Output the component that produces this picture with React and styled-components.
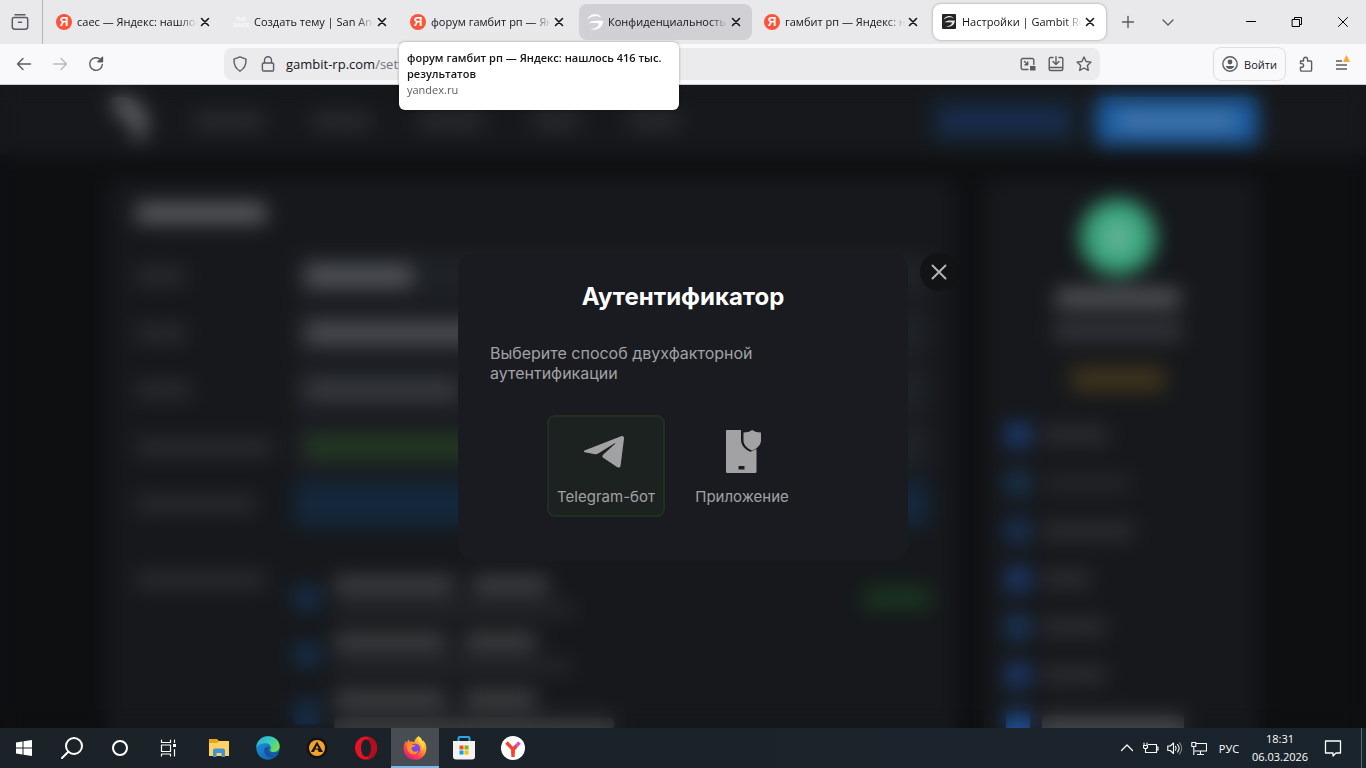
import React from "react";
import styled, { createGlobalStyle, css } from "styled-components";

const GlobalStyle = createGlobalStyle`
  *, *::before, *::after { box-sizing: border-box; }
  body { margin: 0; background: #0e0f11; }
  button, input { font: inherit; color: inherit; }
  button { border: 0; padding: 0; background: none; cursor: pointer; }
  svg { display: block; flex: none; }
`;

const uiFont = `"Segoe UI", "Open Sans", "Noto Sans", sans-serif`;

const Shell = styled.div`
  display: flex;
  flex-direction: column;
  height: 100vh;
  font-family: ${uiFont};
  font-size: 11px;
  color: #15141a;
`;

/* ---------- Tab strip ---------- */

const TabStrip = styled.header`
  display: flex;
  align-items: center;
  height: 44px;
  flex: none;
  background: #e9e9eb;
`;

const RecentButton = styled.button`
  display: grid;
  place-items: center;
  width: 43px;
  height: 44px;
  padding-right: 2px;
  flex: none;
  border-right: 1px solid #b4b4b9;
`;

const Tabs = styled.div`
  display: flex;
  gap: 4px;
  padding: 0 2px 0 5px;
  min-width: 0;
`;

const Tab = styled.div`
  position: relative;
  display: flex;
  align-items: center;
  flex: 0 1 173px;
  width: 173px;
  min-width: 0;
  height: 36px;
  padding: 0 8px;
  border-radius: 8px;
  ${(p) => p.$state === "hover" && css`background: #d0d0d5;`}
  ${(p) => p.$state === "active" && css`
    background: #fff;
    box-shadow: 0 0 3px rgba(0, 0, 0, 0.35);
  `}
`;

const TabButton = styled.button`
  display: flex;
  align-items: center;
  gap: 5px;
  flex: 1;
  min-width: 0;
  height: 36px;
  text-align: left;
`;

const TabTitle = styled.span`
  flex: 1;
  overflow: hidden;
  white-space: nowrap;
  line-height: 20px;
  mask-image: linear-gradient(to right, #000 85%, transparent);
`;

const TabClose = styled.button`
  display: grid;
  place-items: center;
  width: 16px;
  height: 16px;
  flex: none;
`;

const YandexIcon = styled.span`
  display: grid;
  place-items: center;
  width: 16px;
  height: 16px;
  flex: none;
  border-radius: 50%;
  background: #fc5339;
  color: #fff;
  font: 700 12px/16px "Liberation Sans", sans-serif;
`;

const Tooltip = styled.div`
  position: absolute;
  z-index: 5;
  top: 38px;
  left: -3px;
  width: 280px;
  padding: 8px 8px 12px;
  border-radius: 6px;
  background: #fff;
  box-shadow: 0 0 3px rgba(0, 0, 0, 0.35);
  line-height: 16px;
  white-space: normal;
`;

const TooltipTitle = styled.strong`
  display: block;
  font-weight: 600;
`;

const TooltipHost = styled.span`
  display: block;
  color: #5b5b66;
`;

const StripButton = styled.button`
  display: grid;
  place-items: center;
  width: 40px;
  height: 36px;
  flex: none;
`;

const WindowControls = styled.div`
  display: flex;
  margin-left: auto;
  flex: none;
`;

const WindowButton = styled.button`
  display: grid;
  place-items: center;
  width: 46px;
  height: 44px;
`;

/* ---------- Toolbar ---------- */

const Toolbar = styled.nav`
  display: flex;
  align-items: center;
  height: 41px;
  flex: none;
  padding: 0 6px;
  background: #f9f9fb;
  border-bottom: 1px solid #ccccd1;
  color: #5b5b66;
`;

const ToolButton = styled.button`
  display: grid;
  place-items: center;
  width: 36px;
  height: 32px;
  flex: none;
  opacity: ${(p) => (p.disabled ? 0.4 : 1)};
`;

const Spring = styled.div`
  flex: 0 1 ${(p) => p.$size}px;
`;

const UrlBar = styled.div`
  display: flex;
  align-items: center;
  flex: 1;
  min-width: 0;
  height: 32px;
  padding: 0 2px;
  border-radius: 8px;
  background: #ebebed;
`;

const UrlButton = styled.button`
  display: grid;
  place-items: center;
  width: 28px;
  height: 28px;
  flex: none;
`;

const Url = styled.a`
  flex: 1;
  min-width: 0;
  padding-left: 4px;
  font-size: 13px;
  line-height: 20px;
  color: #73737c;
  text-decoration: none;
  white-space: nowrap;
  overflow: hidden;
`;

const UrlHost = styled.span`
  color: #15141a;
`;

const SignIn = styled.button`
  display: flex;
  align-items: center;
  justify-content: center;
  gap: 6px;
  width: 73px;
  height: 34px;
  margin-right: 2px;
  flex: none;
  border: 1px solid #dedee2;
  border-radius: 8px;
  color: #15141a;
`;

/* ---------- Page under the dialog ---------- */

const Page = styled.main`
  position: relative;
  display: grid;
  place-items: center;
  flex: 1;
  min-height: 0;
  overflow: hidden;
  background: #0e0f11;
  font-family: Inter, sans-serif;
`;

const Site = styled.div`
  position: absolute;
  inset: 0;
  overflow: hidden;
`;

const Haze = styled.div`
  position: absolute;
  inset: 0;
  backdrop-filter: blur(10px);
`;

const SiteHeader = styled.div`
  height: 70px;
  background: #16181b;
`;

const Container = styled.div`
  display: flex;
  max-width: 1150px;
  margin: 0 auto;
`;

const HeaderRow = styled(Container)`
  align-items: center;
  height: 72px;
`;

const SiteNav = styled.div`
  display: flex;
  gap: 48px;
  padding-left: 42px;
  flex: 1;
`;

const Bar = styled.span`
  display: block;
  flex: none;
  width: ${(p) => p.$w}px;
  max-width: 100%;
  height: ${(p) => p.$h || 14}px;
  border-radius: 4px;
  background: ${(p) => p.$c || "#2e2f32"};
`;

const HeaderButton = styled.div`
  display: grid;
  place-items: center;
  width: ${(p) => p.$w}px;
  height: 48px;
  margin-left: 18px;
  border-radius: 6px;
  background: ${(p) => p.$c};
`;

const Columns = styled(Container)`
  gap: 28px;
  padding-top: 24px;
`;

const Card = styled.div`
  flex: ${(p) => (p.$side ? "0 0 274px" : "1")};
  min-width: 0;
  height: 700px;
  border-radius: 12px;
  background: #16181b;
`;

const MainCard = styled(Card)`
  padding: 24px 26px 0 28px;
`;

const FormRows = styled.div`
  display: grid;
  gap: 11px;
  padding-top: 30px;
`;

const FormRow = styled.div`
  display: grid;
  grid-template-columns: 158px 1fr;
  align-items: center;
  min-height: 46px;
`;

const Field = styled.div`
  display: flex;
  align-items: center;
  height: 46px;
  padding-left: 12px;
  border-radius: 8px;
  background: ${(p) => p.$c || "#1e2126"};
`;

const Sessions = styled.div`
  display: grid;
  grid-template-columns: 158px 1fr;
  padding-top: 42px;
`;

const SessionLabel = styled.div`
  padding-top: 4px;
`;

const SessionRow = styled.div`
  display: flex;
  align-items: center;
  gap: 14px;
  height: 57px;
`;

const SessionText = styled.div`
  display: grid;
  gap: 10px;
  flex: 1;
  padding-bottom: 4px;
`;

const BarLine = styled.div`
  display: flex;
  gap: 18px;
`;

const SideCard = styled(Card)`
  display: flex;
  flex-direction: column;
  align-items: center;
  padding: 20px 6px 0 0;
`;

const Avatar = styled.div`
  display: grid;
  place-items: center;
  width: 76px;
  height: 76px;
  margin-bottom: 14px;
  border-radius: 50%;
  background: #39a57d;
`;

const AvatarMark = styled.div`
  width: 26px;
  height: 30px;
  border-radius: 8px;
  background: #66b397;
`;

const SideMenu = styled.div`
  align-self: stretch;
  padding: 20px 0 0 22px;
`;

const SideItem = styled.div`
  display: flex;
  align-items: center;
  gap: 12px;
  height: 48px;
`;

/* ---------- Dialog ---------- */

const Dialog = styled.section`
  position: relative;
  width: 450px;
  padding: 30px 32px 44px;
  border-radius: 16px;
  background: #1a1b20;
  color: #a2a2a5;
`;

const DialogTitle = styled.h1`
  margin: 0 0 32px;
  font-size: 24px;
  font-weight: 700;
  line-height: 28px;
  text-align: center;
  color: #fff;
`;

const DialogText = styled.p`
  max-width: 320px;
  margin: 0 0 32px;
  font-size: 16px;
  line-height: 20px;
`;

const Options = styled.div`
  display: flex;
  justify-content: center;
`;

const Option = styled.button`
  display: flex;
  flex-direction: column;
  align-items: center;
  width: 118px;
  height: 102px;
  margin-right: 18px;
  padding-top: 10px;
  gap: 12px;
  border: 2px solid ${(p) => (p.$selected ? "#20301f" : "transparent")};
  border-radius: 8px;
  background: ${(p) => (p.$selected ? "#1c221f" : "transparent")};
  font-size: 15px;
  line-height: 20px;
  white-space: nowrap;
`;

const DialogClose = styled.button`
  position: absolute;
  top: 0;
  left: calc(100% + 12px);
  display: grid;
  place-items: center;
  width: 38px;
  height: 38px;
  border-radius: 50%;
  background: #121315;
`;

/* ---------- Taskbar ---------- */

const Taskbar = styled.footer`
  display: flex;
  align-items: stretch;
  height: 40px;
  flex: none;
  background: linear-gradient(to right, #1b2228, #1a242c);
  color: #fff;
`;

const TaskGroup = styled.div`
  display: flex;
  gap: ${(p) => p.$gap || 0}px;
  margin-left: ${(p) => p.$gap * 3 || 0}px;
`;

const TaskButton = styled.button`
  display: grid;
  place-items: center;
  width: 48px;
  border-bottom: 2px solid ${(p) => (p.$active ? "#76b9ed" : "transparent")};
  border-top: 2px solid transparent;
  background: ${(p) => (p.$active ? "#484d53" : "none")};
  background-clip: border-box;
`;

const Tray = styled.div`
  display: flex;
  align-items: center;
  margin-left: auto;
`;

const TrayButton = styled.button`
  display: grid;
  place-items: center;
  width: ${(p) => p.$w || 24}px;
  height: 40px;
`;

const Clock = styled.time`
  width: 66px;
  text-align: center;
  line-height: 18px;
`;

const DesktopEdge = styled.button`
  width: 5px;
  height: 40px;
  margin-left: 8px;
  border-left: 1px solid #5f666c;
`;

/* ---------- Icons ---------- */

function Line({ size = 16, width = 1.4, color = "currentColor", box = 16, children }) {
  return (
    <svg width={size} height={size} viewBox={`0 0 ${box} ${box}`} fill="none" stroke={color}
      strokeWidth={width} strokeLinecap="round" strokeLinejoin="round" aria-hidden="true">
      {children}
    </svg>
  );
}

const CrossIcon = () => (
  <Line size={16} width={1.6} color="#15141a"><path d="M4.5 4.5l7 7M11.5 4.5l-7 7" /></Line>
);

const SaesIcon = () => (
  <svg width="16" height="16" viewBox="0 0 16 16" fill="#fbfbfc" aria-hidden="true"
    fontFamily="Liberation Sans, sans-serif" fontWeight="700">
    <text x="8" y="7" fontSize="5" textAnchor="middle">THE</text>
    <text x="8" y="13" fontSize="6" textAnchor="middle">SAES</text>
  </svg>
);

const GambitIcon = ({ dark }) => (
  <svg width="16" height="16" viewBox="0 0 16 16" aria-hidden="true">
    {dark && <rect x="1" y="0" width="14" height="15" rx="1" fill="#242424" />}
    <g transform={dark ? "translate(2.600 1.800) scale(.7)" : undefined} fill={dark ? "#e4e4e4" : "#fff"}>
      <path d="M0 5.500C1.500 2 5 0 8.500.3c2.800.2 4.800 1.500 6.300 3.600C12.800 2.600 10.500 2 8 2.200 5 2.400 2.500 3.600 0 5.500z" />
      <path d="M1.500 9.500C3.500 7.500 6 6.800 9 6.800h7c.2 4.600-3 8.500-8.500 8.900-1.500.1-3-.3-4-1 4.500.1 7.700-1.500 8.600-5.200C8.500 9 4.800 8.900 1.500 9.500z" />
    </g>
  </svg>
);

const RecentIcon = () => (
  <Line size={18} box={18} color="#5b5b66" width={1.5}>
    <path d="M4 1.700h10M2.800 4.600h12.400a1.500 1.500 0 011.500 1.500v7.700a2.400 2.400 0 01-2.400 2.400H3.700a2.400 2.400 0 01-2.400-2.400V6.100a1.500 1.500 0 011.500-1.500zM7.500 9.300h3" />
  </Line>
);

const PlayStart = () => (
  <svg width="18" height="18" viewBox="0 0 18 18" fill="#fff" aria-hidden="true">
    <path d="M1 3.500l6.500-1v6H1zM8.500 2.300L17 1v7.500H8.500zM1 9.500h6.500v6l-6.500-1zM8.500 9.500H17V17l-8.500-1.300z" />
  </svg>
);

const ExplorerIcon = () => (
  <svg width="22" height="20" viewBox="0 0 22 20" aria-hidden="true">
    <path d="M1 1h8l2 2h10v15H1z" fill="#e7a614" />
    <path d="M1 5h8l2-2h10v15H1z" fill="#fdd263" />
    <path d="M5 19v-6.500a2 2 0 012-2h8a2 2 0 012 2V19h-3.500v-4h-5v4z" fill="#3f93d8" />
  </svg>
);

const EdgeIcon = () => (
  <svg width="24" height="24" viewBox="0 0 24 24" aria-hidden="true">
    <defs>
      <linearGradient id="edgeTop" x1="0" y1="0" x2="1" y2=".6">
        <stop offset="0" stopColor="#2ba8e0" /><stop offset=".5" stopColor="#36c6c4" /><stop offset="1" stopColor="#6fe04f" />
      </linearGradient>
      <linearGradient id="edgeLow" x1="0" y1="0" x2="1" y2="1">
        <stop offset="0" stopColor="#1b9be2" /><stop offset="1" stopColor="#1155a8" />
      </linearGradient>
    </defs>
    <circle cx="12" cy="12" r="11.700" fill="url(#edgeLow)" />
    <path d="M.3 11.500C.8 5 5.500.3 12 .3c6.800 0 11.700 4.900 11.700 10 0 3.500-2.700 5.700-5.700 5.700-2.500 0-3.900-.9-3.900-1.600 0-.6.900-1 .9-2.600 0-2.600-2.300-4.600-5.300-4.600-4.500 0-8 1.800-9.400 4.300z" fill="url(#edgeTop)" />
    <path d="M8.300 12.500c-.8 5 3 9 7.500 9 2.500 0 4.600-1.100 6-2.700-2.500.9-6.300.8-8.800-1.300-2-1.700-2.200-4.200-.9-6-1.700-.7-3.500.1-3.800 1z" fill="#1b4f9c" />
    <path d="M13.200 10.500c-1.500 1.700-1.200 4 .2 5.300 2.200 2.100 6 1.800 8.900.5-1.700 1.300-3.600 1.600-5.700 1.300-3-.5-5.200-2.900-4.900-5.200.1-1 .7-1.700 1.500-1.900z" fill="#182028" />
  </svg>
);

const AimpIcon = () => (
  <svg width="22" height="22" viewBox="0 0 22 22" aria-hidden="true">
    <circle cx="11" cy="11" r="10.500" fill="#101214" />
    <circle cx="11" cy="11" r="8" fill="#f6a12c" />
    <path d="M11 4.500L17 15h-4.200l-1.300-2.400H9.200L8 15H4.800z" fill="#15171a" />
    <path d="M11 8.500l1.700 3H9.500z" fill="#f6a12c" />
  </svg>
);

const OperaIcon = () => (
  <svg width="24" height="24" viewBox="0 0 24 24" aria-hidden="true">
    <ellipse cx="12" cy="12" rx="11" ry="11.500" fill="#e81226" />
    <path d="M14 1c6 .8 9 5.500 9 11s-3 10.200-9 11z" fill="#b50d1e" />
    <ellipse cx="12" cy="12" rx="5" ry="8.700" fill="#1b232a" />
  </svg>
);

const FirefoxIcon = () => (
  <svg width="24" height="24" viewBox="0 0 24 24" aria-hidden="true">
    <defs>
      <linearGradient id="foxBody" x1=".85" y1=".05" x2=".2" y2=".95">
        <stop offset="0" stopColor="#ffe84a" /><stop offset=".4" stopColor="#ff9a28" />
        <stop offset=".7" stopColor="#ff4450" /><stop offset="1" stopColor="#e31587" />
      </linearGradient>
      <linearGradient id="foxGlobe" x1="0" y1="1" x2="1" y2="0">
        <stop offset="0" stopColor="#5b4be0" /><stop offset="1" stopColor="#a044e8" />
      </linearGradient>
    </defs>
    <path d="M15.500.2c2 1.300 3.300 2.900 3.800 5l1-.8c2 2.100 3.100 4.800 3.100 8C23.400 18.700 18.400 23.800 12 23.800S.6 18.800.6 12.500c0-3 .9-5.800 2.300-7.800l.5 2L5.800 3.500l.9 2.300c1.700-.5 3.400-.2 4.500.5C11.700 3.800 13 1.700 15.500.2z" fill="url(#foxBody)" />
    <circle cx="12" cy="12.800" r="5.400" fill="url(#foxGlobe)" />
    <path d="M3.800 8c2-.8 3.500-.5 5 .7l3.800.5c-.6 1.200-2 1.600-3.400 1.900-.9 1.400-.5 3 .7 3.900 1.800 1.200 4.200.5 5.600-.6-1 3-3.400 4.400-6.300 3.800C5.500 17.400 3.300 13 3.800 8z" fill="#ff9127" />
    <path d="M15.500.2c-1 3 .1 5.300 2.200 7.200 1.600 1.600 1.900 4.500.6 6.700 2.100-1 3.300-4.300 1-8.900-.5-2.100-1.800-3.700-3.800-5z" fill="#ffe14a" />
  </svg>
);

const StoreIcon = () => (
  <svg width="24" height="24" viewBox="0 0 24 24" aria-hidden="true">
    <path d="M6.500 6V2.200A1.200 1.200 0 017.700 1h8.600a1.200 1.200 0 011.200 1.200V6" fill="none" stroke="#27a8e8" strokeWidth="2" />
    <path d="M1 5h22v15.500a3 3 0 01-3 3H4a3 3 0 01-3-3z" fill="#f2f2f2" />
    <path d="M7.500 9.500h4v4h-4z" fill="#f25022" /><path d="M12.500 9.500h4v4h-4z" fill="#7fba00" />
    <path d="M7.500 14.500h4v4h-4z" fill="#00a4ef" /><path d="M12.500 14.500h4v4h-4z" fill="#ffb900" />
  </svg>
);

const YandexBrowserIcon = () => (
  <svg width="24" height="24" viewBox="0 0 24 24" aria-hidden="true">
    <circle cx="12" cy="12" r="12" fill="#fff" />
    <path d="M5.500 6.500l6.500 7v7.500" fill="none" stroke="#f5442b" strokeWidth="3.400" />
    <path d="M18.500 6.500L12 13.500" fill="none" stroke="#e54bc0" strokeWidth="3.400" />
    <path d="M15 10.300l-3 3.200v4" fill="none" stroke="#f5442b" strokeWidth="3.400" />
  </svg>
);

const TelegramIcon = () => (
  <svg width="48" height="48" viewBox="2 -1 48 48" fill="#a2a2a5" aria-hidden="true">
    <path d="M4.500 22.600L41 8.300c1.800-.7 3.300.4 3 2.500l-3.400 26.700c-.3 2-1.800 2.600-3.600 1.500L23.600 30c-1.700-1.200-1.600-2.200-.3-3.500L35.200 15.800c.6-.6-.1-.9-.9-.4L18.600 25.300c-1.600 1-3 1.300-4.800.8l-9-1.800c-1.100-.3-1.200-1.200-.3-1.700z" />
  </svg>
);

const PhoneShieldIcon = () => (
  <svg width="48" height="48" viewBox="-1 -1 48 48" fill="#a2a2a5" aria-hidden="true">
    <path d="M8 2H22v9.500c0 6 4 10.200 9.500 12.300l6-2.800v22.500a1.500 1.500 0 01-1.500 1.500H8.500A1.500 1.500 0 017 43.500V3a1 1 0 011-1zM19.500 38v3.500h6V38z" fillRule="evenodd" />
    <path d="M33.200 2c2.300 1.700 5.300 2.500 8.800 2.500v8c0 4.300-3.500 8-8.800 10-5.200-2-8.700-5.700-8.700-10v-8c3.500 0 6.500-.8 8.700-2.500z" />
  </svg>
);

/* ---------- Data ---------- */

const tabs = [
  { title: "саес — Яндекс: нашлось", icon: "yandex" },
  { title: "Создать тему | San Andreas", icon: "saes" },
  { title: "форум гамбит рп — Яндекс", icon: "yandex", tip: true },
  { title: "Конфиденциальность", icon: "gambit", state: "hover" },
  { title: "гамбит рп — Яндекс: нашлось", icon: "yandex" },
  { title: "Настройки | Gambit RolePlay", icon: "gambitDark", state: "active" },
];

const navWidths = [70, 58, 66, 48, 52];

const settings = [
  { label: 50, value: 106, color: "#56585c" },
  { label: 50, value: 230, color: "#4e5055" },
  { label: 55, value: 150, color: "#383a40" },
  { label: 136, value: 300, color: "#223c20" },
  { label: 120, field: "#14273b" },
];

const sessions = [
  { title: [120, 76], sub: 240, current: true },
  { title: [112, 72], sub: 238 },
  { title: [112, 72], sub: 280, subColor: "#3a3b3d" },
];

const sideItems = [
  { w: 66, icon: "#1c3d78" }, { w: 88, icon: "#193452", color: "#242629" }, { w: 92, icon: "#193358" },
  { w: 48, icon: "#1c3b70" }, { w: 64, icon: "#1a3860" }, { w: 64, icon: "#1c3b70" },
  { w: 142, icon: "#1f4e94", color: "#434446" },
];

function Favicon({ kind }) {
  if (kind === "yandex") return <YandexIcon aria-hidden="true">Я</YandexIcon>;
  if (kind === "saes") return <SaesIcon />;
  return <GambitIcon dark={kind === "gambitDark"} />;
}

function BrowserTabs() {
  return (
    <TabStrip>
      <RecentButton aria-label="Недавние вкладки"><RecentIcon /></RecentButton>
      <Tabs>
        {tabs.map((t) => (
          <Tab key={t.title} $state={t.state}>
            <TabButton>
              <Favicon kind={t.icon} />
              <TabTitle>{t.title}</TabTitle>
            </TabButton>
            <TabClose aria-label="Закрыть вкладку"><CrossIcon /></TabClose>
            {t.tip && (
              <Tooltip role="tooltip">
                <TooltipTitle>форум гамбит рп — Яндекс: нашлось 416 тыс. результатов</TooltipTitle>
                <TooltipHost>yandex.ru</TooltipHost>
              </Tooltip>
            )}
          </Tab>
        ))}
      </Tabs>
      <StripButton aria-label="Новая вкладка">
        <Line color="#5b5b66"><path d="M8 2.500v11M2.500 8h11" /></Line>
      </StripButton>
      <StripButton aria-label="Список вкладок">
        <Line color="#5b5b66"><path d="M3 6l5 5 5-5" /></Line>
      </StripButton>
      <WindowControls>
        <WindowButton aria-label="Свернуть"><Line width={1} color="#000"><path d="M3.500 7.500h9" /></Line></WindowButton>
        <WindowButton aria-label="Восстановить">
          <Line width={1} color="#000"><path d="M3.500 5.500h7v7h-7zM5.500 5.500v-2h7v7h-2" /></Line>
        </WindowButton>
        <WindowButton aria-label="Закрыть"><Line width={1} color="#000"><path d="M3.500 3.500l9 9M12.500 3.500l-9 9" /></Line></WindowButton>
      </WindowControls>
    </TabStrip>
  );
}

function BrowserToolbar() {
  return (
    <Toolbar>
      <ToolButton aria-label="Назад"><Line><path d="M14.500 8h-13M7 2.500L1.500 8 7 13.500" /></Line></ToolButton>
      <ToolButton aria-label="Вперёд" disabled><Line><path d="M1.500 8h13M9 2.500L14.500 8 9 13.500" /></Line></ToolButton>
      <ToolButton aria-label="Обновить">
        <Line><path d="M14.300 8.500A6.300 6.300 0 1112.500 3.600M14.500 1.200v4.600H9.900z" /><path d="M14.500 1.200v4.600H9.900z" fill="currentColor" stroke="none" /></Line>
      </ToolButton>
      <Spring $size={110} />
      <UrlBar>
        <UrlButton aria-label="Защита"><Line><path d="M8 .9l6 2.200c.3 5.500-1.500 9.500-6 12-4.500-2.500-6.300-6.500-6-12z" /></Line></UrlButton>
        <UrlButton aria-label="Соединение защищено">
          <Line><path d="M4.500 7V4.200a3.500 3.500 0 017 0V7M3.600 7h8.800a1.200 1.200 0 011.200 1.200v5.600a1.200 1.200 0 01-1.200 1.200H3.600a1.200 1.200 0 01-1.200-1.200V8.200A1.200 1.200 0 013.600 7z" /></Line>
        </UrlButton>
        <Url href="#settings"><UrlHost>gambit-rp.com</UrlHost>/settings</Url>
        <UrlButton aria-label="Картинка в картинке">
          <Line><path d="M8 13.500H2.700a1.500 1.500 0 01-1.500-1.500V4a1.500 1.500 0 011.500-1.500h9.600A1.500 1.500 0 0113.800 4v4.500M4.500 5.500l3 3M7.700 6v2.700H5" /><path d="M10 10h5.500v4.500H10z" fill="currentColor" stroke="none" /></Line>
        </UrlButton>
        <UrlButton aria-label="Установить приложение">
          <Line><path d="M5 1.500H2.500a1.300 1.300 0 00-1.300 1.300v10.400a1.300 1.300 0 001.300 1.300h11a1.300 1.300 0 001.300-1.300V2.800a1.300 1.300 0 00-1.300-1.300H11M1.200 11.500h13.600M8 .8v7.500M5 5.500l3 3 3-3" /></Line>
        </UrlButton>
        <UrlButton aria-label="Добавить в закладки">
          <Line><path d="M8 1l2.100 4.500 4.900.6-3.600 3.400.9 4.900L8 12l-4.300 2.400.9-4.900L1 6.100l4.900-.6z" /></Line>
        </UrlButton>
      </UrlBar>
      <Spring $size={113} />
      <SignIn>
        <svg width="16" height="16" viewBox="0 0 16 16" aria-hidden="true">
          <circle cx="8" cy="8" r="7.200" fill="none" stroke="#5b5b66" strokeWidth="1.400" />
          <circle cx="8" cy="6" r="2.400" fill="#5b5b66" />
          <path d="M3.800 10h8.400c-.5 1.900-2.100 3-4.200 3s-3.700-1.100-4.200-3z" fill="#5b5b66" />
        </svg>
        Войти
      </SignIn>
      <ToolButton aria-label="Расширения">
        <Line><path d="M2.500 5h3V3.300a2 2 0 014 0V5h3.300a.8.800 0 01.8.8v8.500a.8.800 0 01-.8.800H3.300a.8.800 0 01-.8-.8v-3h1.700a1.900 1.900 0 000-3.700H2.500z" /></Line>
      </ToolButton>
      <ToolButton aria-label="Меню">
        <svg width="16" height="18" viewBox="0 0 16 18" aria-hidden="true">
          <path d="M2 6h6M2 10h11M2 14h11" stroke="#5b5b66" strokeWidth="1.400" />
          <path d="M12.500 0L16 7H9z" fill="#ffa436" />
        </svg>
      </ToolButton>
    </Toolbar>
  );
}

function SiteBackdrop() {
  return (
    <Site aria-hidden="true">
      <SiteHeader>
        <HeaderRow>
          <svg width="44" height="52" viewBox="0 0 44 52" fill="#626365">
            <path d="M2 4c14-6 28 0 35 14 5 12 2 24-9 31-1-9-2-17-8-23C12 22 6 16 2 4z" />
          </svg>
          <SiteNav>
            {navWidths.map((w, i) => <Bar key={i} $w={w} />)}
          </SiteNav>
          <HeaderButton $w={148} $c="#15222f"><Bar $w={126} $h={18} $c="#192f57" /></HeaderButton>
          <HeaderButton $w={162} $c="#1b5ca0"><Bar $w={118} $h={18} $c="#4678ab" /></HeaderButton>
        </HeaderRow>
      </SiteHeader>
      <Columns>
        <MainCard>
          <Bar $w={130} $h={20} $c="#5c5d5f" />
          <FormRows>
            {settings.map((s, i) => (
              <FormRow key={i}>
                <Bar $w={s.label} />
                <Field $c={s.field}>{s.value && <Bar $w={s.value} $h={20} $c={s.color} />}</Field>
              </FormRow>
            ))}
          </FormRows>
          <Sessions>
            <SessionLabel><Bar $w={130} /></SessionLabel>
            <div>
              {sessions.map((s, i) => (
                <SessionRow key={i}>
                  <Bar $w={26} $h={24} $c="#162f4c" />
                  <SessionText>
                    <BarLine>{s.title.map((w, j) => <Bar key={j} $w={w} $h={16} $c="#434446" />)}</BarLine>
                    <Bar $w={s.sub} $h={12} $c={s.subColor || "#292a2c"} />
                  </SessionText>
                  {s.current && <Bar $w={66} $h={20} $c="#1b3820" />}
                </SessionRow>
              ))}
            </div>
          </Sessions>
        </MainCard>
        <SideCard $side>
          <Avatar><AvatarMark /></Avatar>
          <Bar $w={124} $h={18} $c="#56575a" />
          <Bar $w={124} $h={14} $c="transparent" />
          <Bar $w={128} $h={20} $c="#33343a" />
          <Bar $w={124} $h={26} $c="transparent" />
          <Bar $w={94} $h={24} $c="#40351d" />
          <SideMenu>
            {sideItems.map((s, i) => (
              <SideItem key={i}>
                <Bar $w={24} $h={24} $c={s.icon} />
                <Bar $w={s.w} $h={16} $c={s.color} />
              </SideItem>
            ))}
          </SideMenu>
        </SideCard>
      </Columns>
    </Site>
  );
}

function AuthDialog() {
  return (
    <Dialog role="dialog" aria-labelledby="auth-title">
      <DialogTitle id="auth-title">Аутентификатор</DialogTitle>
      <DialogText>Выберите способ двухфакторной аутентификации</DialogText>
      <Options>
        <Option $selected><TelegramIcon />Telegram-бот</Option>
        <Option><PhoneShieldIcon />Приложение</Option>
      </Options>
      <DialogClose aria-label="Закрыть">
        <Line size={16} width={2} color="#b4b4b6"><path d="M1.500 1.500l13 13M14.500 1.500l-13 13" /></Line>
      </DialogClose>
    </Dialog>
  );
}

function WindowsTaskbar() {
  return (
    <Taskbar>
      <TaskGroup>
        <TaskButton aria-label="Пуск"><PlayStart /></TaskButton>
        <TaskButton aria-label="Поиск">
          <Line size={24} box={24} width={2} color="#fff"><circle cx="14" cy="10" r="8" /><path d="M8.300 15.700L2 22" /></Line>
        </TaskButton>
        <TaskButton aria-label="Кортана"><Line size={18} box={18} width={2} color="#fff"><circle cx="9" cy="9" r="7" /></Line></TaskButton>
        <TaskButton aria-label="Представление задач">
          <Line size={18} box={18} width={1.2} color="#fff">
            <path d="M2.500 1v2.500h9V1M2.500 6h9v6.500h-9zM2.500 17v-2h9v2M15.500 1v2.500M15.500 10.500V17" />
            <path d="M14 5h3v3h-3z" fill="#fff" stroke="none" />
          </Line>
        </TaskButton>
      </TaskGroup>
      <TaskGroup $gap={1}>
        <TaskButton aria-label="Проводник"><ExplorerIcon /></TaskButton>
        <TaskButton aria-label="Microsoft Edge"><EdgeIcon /></TaskButton>
        <TaskButton aria-label="AIMP"><AimpIcon /></TaskButton>
        <TaskButton aria-label="Opera"><OperaIcon /></TaskButton>
        <TaskButton aria-label="Firefox" $active><FirefoxIcon /></TaskButton>
        <TaskButton aria-label="Microsoft Store"><StoreIcon /></TaskButton>
        <TaskButton aria-label="Яндекс Браузер"><YandexBrowserIcon /></TaskButton>
      </TaskGroup>
      <Tray>
        <TrayButton aria-label="Скрытые значки"><Line width={1.3} color="#fff"><path d="M2.500 10.500L8 5l5.500 5.500" /></Line></TrayButton>
        <TrayButton aria-label="Батарея">
          <Line width={1.1} color="#fff"><path d="M5.500 4.500h8v8h-7M13.500 7h1.500v3h-1.500M1 3v2.500M4 3v2.500M.5 5.500h4v2l-1 1h-2l-1-1zM2.500 8.500v4h3" /></Line>
        </TrayButton>
        <TrayButton aria-label="Громкость">
          <Line width={1.1} color="#fff"><path d="M.8 6v4.500h2.500L6.500 13.500V3L3.300 6zM8.500 6.300c.9 1.200.9 2.700 0 3.900M10.500 4.500c2 2.200 2 5.300 0 7.500" /><path d="M12.500 2.800c2.800 3.300 2.800 7.700 0 11" opacity=".5" /></Line>
        </TrayButton>
        <TrayButton aria-label="Сеть">
          <Line width={1.1} color="#fff"><path d="M5.500 3.500h10v7.500H4M9.500 11v3.500M6.500 14.500h6M.8 2.500h4v4h-4zM2.800 6.500v8" /></Line>
        </TrayButton>
        <TrayButton $w={36}>РУС</TrayButton>
        <Clock dateTime="2026-03-06T18:31">18:31<br />06.03.2026</Clock>
        <TrayButton $w={40} aria-label="Уведомления">
          <Line size={18} box={18} width={1.3} color="#fff"><path d="M1.500 2h15v12h-4.500l-3 3v-3H1.500z" /></Line>
        </TrayButton>
        <DesktopEdge aria-label="Показать рабочий стол" />
      </Tray>
    </Taskbar>
  );
}

export default function App() {
  return (
    <Shell>
      <GlobalStyle />
      <BrowserTabs />
      <BrowserToolbar />
      <Page>
        <SiteBackdrop />
        <Haze />
        <AuthDialog />
      </Page>
      <WindowsTaskbar />
    </Shell>
  );
}
